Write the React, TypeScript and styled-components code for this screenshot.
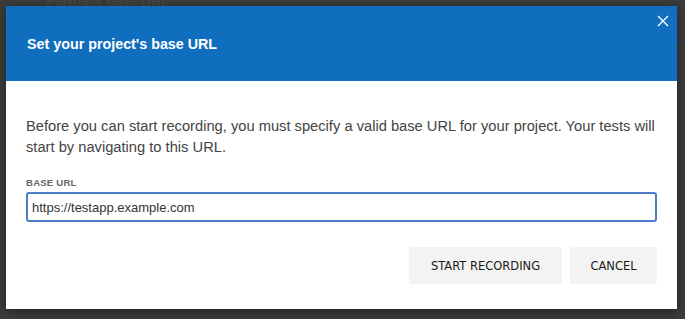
import React from "react";
import styled, { createGlobalStyle } from "styled-components";

const Global = createGlobalStyle`
  html, body { margin: 0; padding: 0; }
  body {
    background: #3c3c3c;
    width: 685px;
    height: 319px;
    overflow: hidden;
    font-family: "Liberation Sans", Arial, sans-serif;
  }
`;

const Page = styled.div`
  position: relative;
  width: 685px;
  height: 319px;
  padding: 6px 8px 0 6px;
  box-sizing: border-box;
  background: #3c3c3c;
`;

const BehindText = styled.div`
  position: absolute;
  top: -7px;
  left: 46px;
  font-size: 14px;
  color: #4a4a4a;
`;

const BehindLine = styled.div`
  position: absolute;
  top: 41px;
  right: 0;
  width: 8px;
  height: 1px;
  background: #1c3f6a;
`;

const Dialog = styled.div`
  position: relative;
  width: 671px;
  height: 303px;
  background: #ffffff;
  display: flex;
  flex-direction: column;
  box-shadow: 0 2px 10px rgba(0, 0, 0, 0.45);
`;

const Header = styled.div`
  height: 75px;
  background: #106ebe;
  display: flex;
  align-items: center;
  padding: 1px 0 0 21px;
  box-sizing: border-box;
  flex-shrink: 0;
`;

const Title = styled.h2`
  margin: 0;
  font-size: 14.3px;
  font-weight: bold;
  color: #ffffff;
`;

const CloseButton = styled.button`
  position: absolute;
  top: 7px;
  right: 6px;
  width: 16px;
  height: 16px;
  padding: 0;
  border: none;
  background: transparent;
  display: flex;
  align-items: center;
  justify-content: center;
  cursor: pointer;
`;

const Body = styled.div`
  padding: 35px 20px 0 20px;
  display: flex;
  flex-direction: column;
`;

const Text = styled.p`
  margin: 0;
  font-size: 14.7px;
  line-height: 21px;
  color: #444444;
`;

const Label = styled.label`
  margin-top: 20px;
  font-size: 9.6px;
  line-height: 10px;
  font-weight: bold;
  letter-spacing: 0.2px;
  color: #666666;
`;

const Input = styled.input`
  margin-top: 4px;
  height: 30px;
  box-sizing: border-box;
  width: 631px;
  border: 2px solid #4b7ec6;
  border-radius: 3px;
  padding: 0 4px;
  font-family: "Liberation Sans", Arial, sans-serif;
  font-size: 13px;
  color: #333333;
  outline: none;
`;

const Actions = styled.div`
  display: flex;
  justify-content: flex-end;
  gap: 8px;
  padding: 25px 20px 0 0;
`;

const Button = styled.button<{ $w: number }>`
  width: ${(p) => p.$w}px;
  height: 37px;
  border: none;
  border-radius: 3px;
  background: #f3f3f3;
  color: #1a1a1a;
  font-family: "DejaVu Sans", Tahoma, sans-serif;
  font-size: 11.5px;
  cursor: pointer;
`;

export default function App() {
  return (
    <>
      <Global />
      <Page>
        <BehindText>Playback base URL</BehindText>
        <BehindLine />
        <Dialog>
          <Header>
            <Title>Set your project's base URL</Title>
          </Header>
          <CloseButton aria-label="Close">
            <svg width="12" height="12" viewBox="0 0 12 12">
              <path d="M1 1 L11 11 M11 1 L1 11" stroke="#ffffff" strokeWidth="1.4" />
            </svg>
          </CloseButton>
          <Body>
            <Text>
              Before you can start recording, you must specify a valid base URL for your project. Your tests will
              start by navigating to this URL.
            </Text>
            <Label>BASE URL</Label>
            <Input defaultValue="https://testapp.example.com" />
          </Body>
          <Actions>
            <Button $w={153}>START RECORDING</Button>
            <Button $w={87}>CANCEL</Button>
          </Actions>
        </Dialog>
      </Page>
    </>
  );
}
